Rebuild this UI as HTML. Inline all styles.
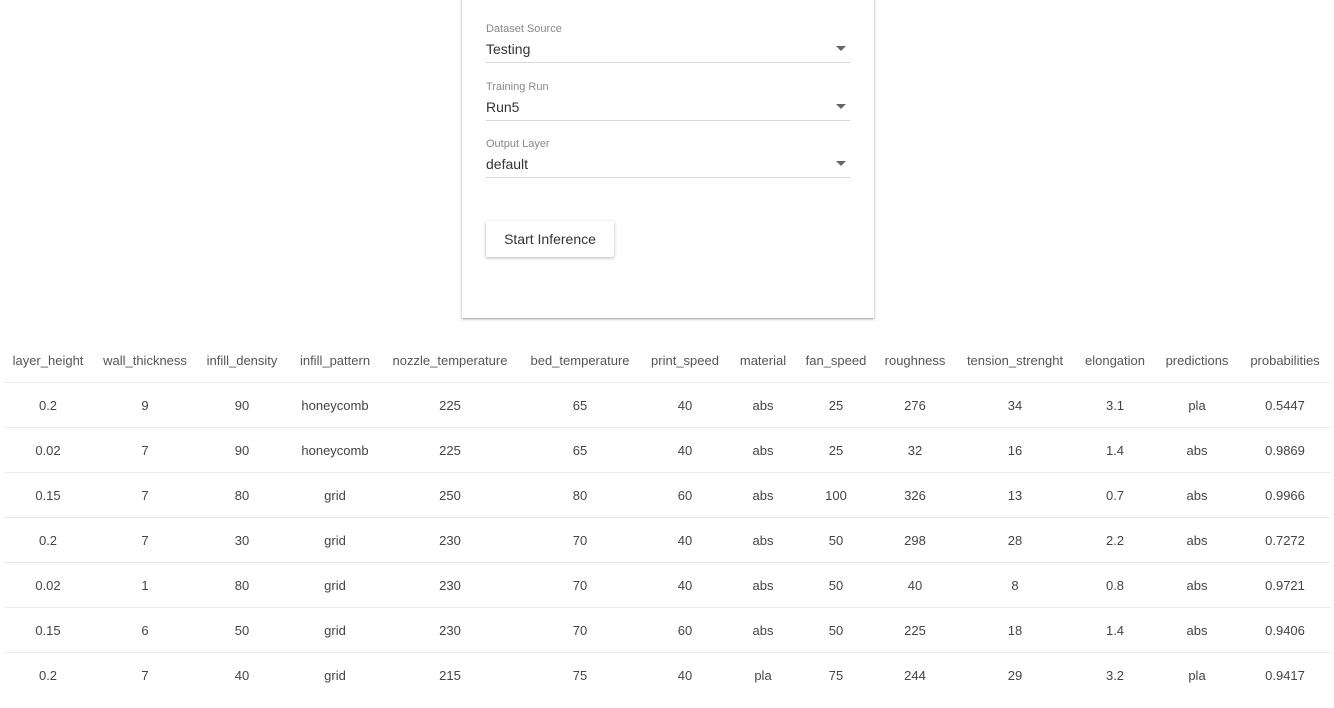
<!DOCTYPE html>
<html><head><meta charset="utf-8"><style>
*{margin:0;padding:0;box-sizing:border-box}
body{width:1334px;height:708px;background:#fff;font-family:"Liberation Sans",sans-serif;color:#333;position:relative;overflow:hidden}
.card{position:absolute;left:462px;top:-4px;width:412px;height:322px;background:#fff;box-shadow:0 1px 3px rgba(0,0,0,.3),0 1px 1px rgba(0,0,0,.12)}
.lbl{position:absolute;left:486px;font-size:11px;color:#888}
.val{position:absolute;left:486px;font-size:14px;color:#333}
.line{position:absolute;left:486px;width:364px;height:1px;background:#d8d8d8}
.arr{position:absolute;left:836px;width:0;height:0;border-left:5px solid transparent;border-right:5px solid transparent;border-top:5px solid #666}
.btn{position:absolute;left:486px;top:221px;width:128px;height:36px;background:#fff;box-shadow:0 1px 3px rgba(0,0,0,.3);border-radius:2px;font-size:14px;line-height:36px;text-align:center;color:#333}
.c{position:absolute;font-size:13px;transform:translateX(-50%);white-space:nowrap;color:#444}
.h{color:#555}
.hr{position:absolute;left:4px;width:1326px;height:1px;background:#eaeaea}
</style></head><body>
<div class="card"></div>
<div class="lbl" style="top:23px">Dataset Source</div>
<div class="val" style="top:41px">Testing</div>
<div class="arr" style="top:46px"></div>
<div class="line" style="top:62px"></div>
<div class="lbl" style="top:81px">Training Run</div>
<div class="val" style="top:99px">Run5</div>
<div class="arr" style="top:104px"></div>
<div class="line" style="top:120px"></div>
<div class="lbl" style="top:138px">Output Layer</div>
<div class="val" style="top:156px">default</div>
<div class="arr" style="top:161px"></div>
<div class="line" style="top:177px"></div>
<div class="btn">Start Inference</div>
<div id="t"></div>
<script>
var xs=[48,145,242,335,450,580,685,763,836,915,1015,1115,1197,1285];
var hd=["layer_height","wall_thickness","infill_density","infill_pattern","nozzle_temperature","bed_temperature","print_speed","material","fan_speed","roughness","tension_strenght","elongation","predictions","probabilities"];
var rows=[
["0.2","9","90","honeycomb","225","65","40","abs","25","276","34","3.1","pla","0.5447"],
["0.02","7","90","honeycomb","225","65","40","abs","25","32","16","1.4","abs","0.9869"],
["0.15","7","80","grid","250","80","60","abs","100","326","13","0.7","abs","0.9966"],
["0.2","7","30","grid","230","70","40","abs","50","298","28","2.2","abs","0.7272"],
["0.02","1","80","grid","230","70","40","abs","50","40","8","0.8","abs","0.9721"],
["0.15","6","50","grid","230","70","60","abs","50","225","18","1.4","abs","0.9406"],
["0.2","7","40","grid","215","75","40","pla","75","244","29","3.2","pla","0.9417"]];
var h="";
hd.forEach(function(t,i){h+='<div class="c h" style="left:'+xs[i]+'px;top:353px">'+t+'</div>';});
rows.forEach(function(r,j){
 h+='<div class="hr" style="top:'+(382+45*j)+'px"></div>';
 r.forEach(function(t,i){h+='<div class="c" style="left:'+xs[i]+'px;top:'+(398+45*j)+'px">'+t+'</div>';});
});
document.getElementById("t").innerHTML=h;
</script>
</body></html>
